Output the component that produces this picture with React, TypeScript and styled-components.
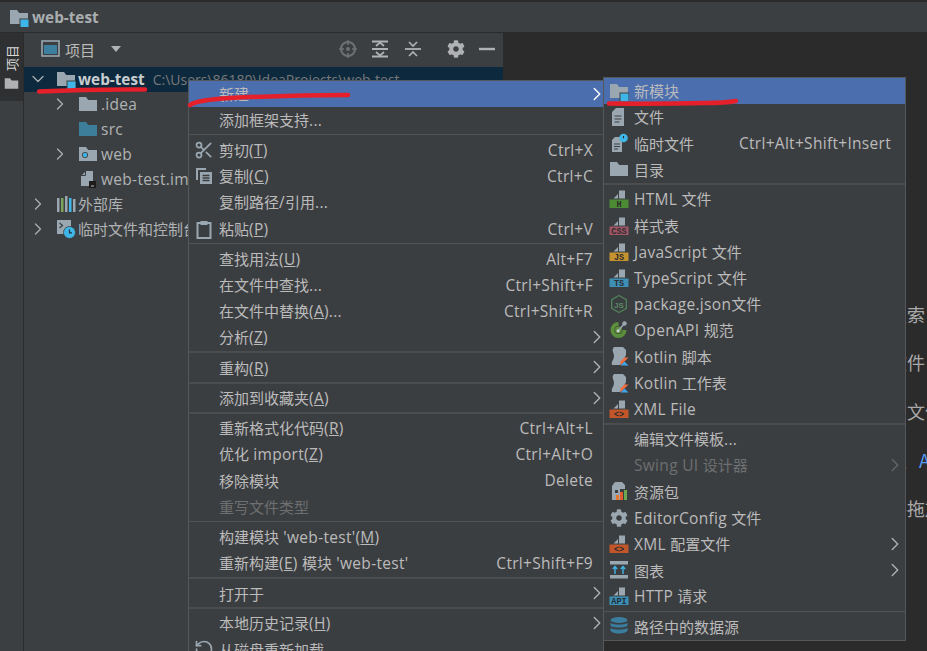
import React from 'react';
import styled, { createGlobalStyle } from 'styled-components';
import { Scissors, ChevronRight, ChevronDown, RotateCcw } from 'lucide-react';
import { FaCog } from 'react-icons/fa';

const Global = createGlobalStyle`
  html, body { margin: 0; padding: 0; background: #2b2b2b; }
  body { font-family: "Open Sans", "Noto Sans CJK SC", sans-serif; }
`;

const FONT = `"Open Sans", "Noto Sans CJK SC", sans-serif`;

const Page = styled.div`
  position: relative; width: 927px; height: 651px; overflow: hidden;
  display: flex; flex-direction: column; background: #2b2b2b; color: #bbbbbb; font-family: ${FONT};
`;
const TitleBar = styled.div`
  height: 30px; flex: none; margin-top: 2px; background: #3c3f41; border-bottom: 1px solid #2b2b2b;
  display: flex; align-items: center; gap: 3px; padding-left: 9px; box-sizing: content-box;
`;
const TitleText = styled.span`
  font-size: 15.3px; font-weight: 700; color: #a9adb0; line-height: 1; padding-top: 2px;
`;
const Body = styled.div`
  flex: 1; display: flex; min-height: 0;
`;
const SideBar = styled.div`
  width: 23px; flex: none; background: #3c3f41; border-right: 1px solid #2b2b2b;
`;
const SideTab = styled.div`
  height: 68px; background: #2e3031; display: flex; flex-direction: column; align-items: center; padding-top: 12px; box-sizing: border-box; gap: 5px;
`;
const SideLabel = styled.span`
  writing-mode: vertical-rl; text-orientation: sideways; transform: rotate(180deg); font-size: 13px; line-height: 14px; color: #d8d8d8;
`;
const ProjectPanel = styled.div`
  width: 479px; flex: none; background: #3c3f41; display: flex; flex-direction: column;
`;
const PanelHeader = styled.div`
  height: 34px; flex: none; display: flex; align-items: center; padding: 0 6px 2px 17px; box-sizing: border-box;
`;
const PanelTitle = styled.span`
  font-size: 15px; margin-left: 4px; color: #bbbbbb;
`;
const Caret = styled.span`
  width: 0; height: 0; margin-left: 16px; border-left: 5px solid transparent; border-right: 5px solid transparent; border-top: 6px solid #afb1b3;
`;
const HeaderTools = styled.div`
  margin-left: auto; display: flex; align-items: center; gap: 12.5px;
`;
const ToolGap = styled.span`
  width: 0; margin-left: -1px;
`;
const Tree = styled.div`
  display: flex; flex-direction: column;
`;
const TreeRow = styled.div<{ $depth: number; $selected?: boolean }>`
  height: 25px; display: flex; align-items: center; padding: 0 0 1px ${p => 4 + p.$depth * 22}px; gap: 2px; box-sizing: border-box;
  background: ${p => (p.$selected ? '#0d293e' : 'transparent')}; white-space: nowrap; font-size: 15px;
`;
const TreeArrow = styled.span`
  width: 20px; flex: none; display: flex; align-items: center; justify-content: center; color: #a9adb0; margin-right: 6px;
`;
const TreeName = styled.span<{ $bold?: boolean; $cjk?: boolean }>`
  font-weight: ${p => (p.$bold ? 700 : 400)}; font-size: ${p => (p.$bold ? 15.3 : 15)}px; color: ${p => (p.$bold ? '#c8ccce' : '#b0b3b5')};
  margin: ${p => (p.$cjk ? '-2px 0 0 0' : p.$bold ? '0' : '0 0 0 1px')};
`;
const TreePath = styled.span`
  color: #787878; margin-left: 6px; font-size: 14px;
`;
const Editor = styled.div`
  flex: 1; background: #2b2b2b; overflow: hidden; padding: 266.5px 0 0 350px; min-width: 0;
`;
const Hint = styled.div`
  height: 48.7px; font-size: 18px; line-height: 28px; color: #a9a9a9; white-space: nowrap; font-family: "Noto Sans CJK SC", sans-serif;
`;
const HintKey = styled.span`
  color: #589df6; margin-left: 12px;
`;
const Menu = styled.div<{ $left: number; $top: number; $width: number }>`
  position: absolute; left: ${p => p.$left}px; top: ${p => p.$top}px; width: ${p => p.$width}px;
  box-sizing: border-box; background: #3b3e41; border: 1px solid #55585a; display: flex; flex-direction: column;
`;
const Row = styled.div<{ $active?: boolean; $pad: number; $end: number }>`
  position: relative; flex: none; height: 26.2px; display: flex; align-items: center; padding: 0 ${p => p.$end}px 0 ${p => p.$pad}px;
  font-size: 15px; white-space: nowrap; background: ${p => (p.$active ? '#4b6eaf' : 'transparent')};
`;
const RowIcon = styled.span<{ $left: number }>`
  position: absolute; left: ${p => p.$left}px; top: 3px; width: 20px; height: 20px; color: #afb1b3; display: flex;
`;
const RowLabel = styled.span<{ $off?: boolean }>`
  color: ${p => (p.$off ? '#6d6f70' : '#bbbbbb')};
`;
const Shortcut = styled.span`
  margin-left: auto; color: #bbbbbb;
`;
const Latin = styled.span`
  font-size: 15.5px; letter-spacing: 0.3px;
`;
const RowArrow = styled.span<{ $off?: boolean; $active?: boolean; $right: number }>`
  position: absolute; right: ${p => p.$right}px; top: 2px; display: flex; color: ${p => (p.$active ? '#ffffff' : p.$off ? '#666' : '#afb1b3')};
`;
const Sep = styled.div<{ $thick?: boolean }>`
  flex: none; height: 4px; display: flex; align-items: center;
  &::after { content: ''; flex: 1; height: ${p => (p.$thick ? 2 : 1)}px; background: ${p => (p.$thick ? '#4c4d4e' : '#515355')}; }
`;
const Ink = styled.svg`
  position: absolute; left: 0; top: 0; pointer-events: none;
`;
const Icon = styled.svg`
  display: block; flex: none;
`;

/* Splits a label into CJK and Latin runs; "_X" inside a Latin run is an underlined mnemonic. */
const Mixed = ({ text }: { text: string }) => (
  <>
    {text.split(/([\x00-\x7f]+)/).map((run, n) =>
      n % 2 === 0 ? (
        run
      ) : (
        <Latin key={n}>
          {run.split(/_(.)/).map((part, m) => (m % 2 === 1 ? <u key={m}>{part}</u> : part))}
        </Latin>
      )
    )}
  </>
);

const G = '#9aa7b0';
const S = ({ children, size = 20 }: { children: React.ReactNode; size?: number }) => (
  <Icon width={size} height={size} viewBox="0 0 20 20">{children}</Icon>
);
const FolderPath = 'M1 3h7l2.2 3H19v11H1z';
const Folder = ({ c = G }: { c?: string }) => <S><path d={FolderPath} fill={c} /></S>;
const ModuleFolder = () => (
  <S><path d={FolderPath} fill={G} /><rect x="10.5" y="11.5" width="9.5" height="8.5" fill="#3c3f41" /><rect x="11.5" y="12.5" width="8" height="7.5" fill="#3fb6e8" /></S>
);
const WebFolder = () => (
  <S><path d={FolderPath} fill={G} /><circle cx="7" cy="11" r="3" fill="#3c3f41" /><circle cx="7" cy="11" r="2.2" fill="#3fb6e8" /></S>
);
const Doc = () => (
  <S>
    <path d="M7 1h8v18H3V5z" fill={G} />
    <path d="M5.5 9h7M5.5 12h7M5.5 15h5" stroke="#3c3f41" strokeWidth="1.2" />
  </S>
);
const Scratch = () => (
  <S>
    <path d="M6 4h7v15H3V7z" fill={G} />
    <path d="M5 11h6M5 13.5h6M5 16h4" stroke="#3c3f41" strokeWidth="1.2" />
    <circle cx="14.5" cy="5" r="4.3" fill="#3fb6e8" />
    <path d="M14.5 3v2.4" stroke="#2b2b2b" strokeWidth="1.1" />
  </S>
);
const Banner = ({ c, t, tc = '#2b2b2b', fs = 8.5 }: { c: string; t: string; tc?: string; fs?: number }) => (
  <S>
    <path d="M4.5 9.5l4.5-4.5v4.5z M10 1.5h6v8h-6z" fill={G} />
    <rect x="0.5" y="10.5" width="19" height="8.5" fill={c} />
    <text x="10" y="17.6" fontSize={fs} fontWeight="700" textAnchor="middle" fill={tc} fontFamily="Liberation Mono, monospace">{t}</text>
  </S>
);
const NodeIcon = () => (
  <S>
    <path d="M10 1.5l7.3 4.2v8.6L10 18.5l-7.3-4.2V5.7z" fill="none" stroke="#4f7f58" strokeWidth="1.4" />
    <text x="10" y="13.6" fontSize="8" fontWeight="700" textAnchor="middle" fill="#5c8a63" fontFamily="Liberation Sans, sans-serif">JS</text>
  </S>
);
const OpenApiIcon = () => (
  <S>
    <path d="M9.5 2a8 8 0 1 0 8 8h-4a4 4 0 1 1-4-4z" fill="#5b8f3c" />
    <circle cx="9.5" cy="10" r="3.4" fill="#5b8f3c" />
    <path d="M9 11l6-7" stroke={G} strokeWidth="1.5" />
    <circle cx="15.5" cy="3.5" r="2.2" fill={G} />
    <circle cx="9" cy="11" r="1.4" fill="#d5d5d5" />
  </S>
);
const KotlinIcon = () => (
  <S>
    <path d="M5 1h9l3 3v5l-5 10H3c-1-4 2-5 2-9S2 5 5 1z" fill={G} />
    <path d="M10 20l9-10h2v10z" fill="#3c3f41" />
    <path d="M11.5 19.5l8-8h-4l-4 4z" fill="#f26d3d" />
    <path d="M15.5 15.5l4 4h-8z" fill="#3fa5e8" />
  </S>
);
const BundleIcon = () => (
  <S>
    <path d="M6 1h7l3 3v4h-5v11H3V5z" fill={G} />
    <rect x="6" y="9" width="3" height="3" fill="#3c3f41" />
    <rect x="7" y="14" width="3" height="5" fill="#e8772e" />
    <rect x="11" y="11" width="3" height="8" fill="#e05c30" />
    <rect x="15" y="9" width="3" height="10" fill="#6aa84f" />
  </S>
);
const DiagramIcon = () => (
  <S>
    <rect x="1" y="1" width="18" height="3.5" fill={G} />
    <rect x="1" y="15" width="18" height="3.5" fill={G} />
    <path d="M6 14V7M3.8 9L6 6.5 8.2 9M14 14V7M11.8 9L14 6.5 16.2 9" fill="none" stroke="#3fb6e8" strokeWidth="1.4" />
  </S>
);
const DbIcon = () => (
  <S>
    <ellipse cx="10" cy="4" rx="8.5" ry="3" fill="#3b7d9e" />
    <path d="M1.5 6.5c1 2.8 16 2.8 17 0v3c-1 2.8-16 2.8-17 0zM1.5 11.5c1 2.8 16 2.8 17 0v3c-1 4-16 4-17 0z" fill="#3b7d9e" />
  </S>
);
const CopyIcon = () => (
  <S>
    <path d="M2 3h2v11H2zM2 2h10v2H2z" fill={G} />
    <path d="M6 6h12v12H6z" fill={G} />
    <path d="M8.5 9.5h7M8.5 12h7M8.5 14.5h7" stroke="#3c3f41" strokeWidth="1.3" />
  </S>
);
const PasteIcon = () => (
  <S>
    <path d="M3.5 4h13v15h-13z" fill="none" stroke={G} strokeWidth="2" />
    <rect x="6.5" y="2" width="7" height="4" fill={G} />
  </S>
);
const Libs = () => (
  <S>
    <rect x="1" y="4" width="2.5" height="14" fill={G} />
    <rect x="5" y="4" width="2.5" height="14" fill="#7ca45a" />
    <rect x="9" y="2" width="2.5" height="16" fill={G} />
    <rect x="13" y="4" width="2.5" height="14" fill="#3fb6e8" />
    <rect x="17" y="5" width="2.5" height="13" fill={G} />
  </S>
);
const ScratchFolder = () => (
  <S>
    <rect x="1" y="1" width="14" height="14" fill={G} />
    <path d="M3.5 4l3 2.5-3 2.5" fill="none" stroke="#3c3f41" strokeWidth="1.3" />
    <circle cx="13.5" cy="13.5" r="6" fill="#3fb6e8" stroke="#3c3f41" strokeWidth="0.8" />
    <path d="M13.5 10.5v3.3h2.5" fill="none" stroke="#22303a" strokeWidth="1.2" />
  </S>
);
const ImlIcon = () => (
  <S>
    <path d="M8 2h7v15H3V7z" fill={G} />
    <path d="M2.5 6.5h5V2" fill="none" stroke="#3c3f41" strokeWidth="1" />
    <rect x="11" y="12" width="7" height="7" fill="#1c1c1c" />
    <rect x="13" y="16.5" width="3" height="1" fill="#bbb" />
  </S>
);
const ViewIcon = () => (
  <S>
    <rect x="1" y="2" width="17" height="15" fill="none" stroke={G} strokeWidth="1.6" />
    <rect x="3" y="6" width="13" height="9" fill="#3c7f9e" />
  </S>
);
const Target = () => (
  <S>
    <circle cx="10" cy="10" r="7" fill="none" stroke="#6e7173" strokeWidth="2" />
    <circle cx="10" cy="10" r="2" fill="#6e7173" />
    <path d="M10 1v5M10 14v5M1 10h5M14 10h5" stroke="#6e7173" strokeWidth="1.6" />
  </S>
);
const ExpandAll = () => (
  <S>
    <path d="M2 2.5h16M2 17.5h16M2 10h16" stroke="#afb1b3" strokeWidth="1.8" />
    <path d="M6 7l4-3.5L14 7M6 13l4 3.5 4-3.5" fill="none" stroke="#afb1b3" strokeWidth="1.7" />
  </S>
);
const CollapseAll = () => (
  <S>
    <path d="M2 10h16" stroke="#afb1b3" strokeWidth="1.8" />
    <path d="M6 3l4 4 4-4M6 17l4-4 4 4" fill="none" stroke="#afb1b3" strokeWidth="1.7" />
  </S>
);
const Minus = () => <S><path d="M2 10h16" stroke="#afb1b3" strokeWidth="2.4" /></S>;

type Item = { l?: string; k?: string; i?: React.ReactNode; arrow?: boolean; off?: boolean; active?: boolean; sep?: boolean; thick?: boolean };

const mainItems: Item[] = [
  { l: '新建', arrow: true, active: true },
  { l: '添加框架支持...' },
  { sep: true },
  { l: '剪切(_T)', k: 'Ctrl+X', i: <Scissors size={20} strokeWidth={2.1} color={G} /> },
  { l: '复制(_C)', k: 'Ctrl+C', i: <CopyIcon /> },
  { l: '复制路径/引用...' },
  { l: '粘贴(_P)', k: 'Ctrl+V', i: <PasteIcon /> },
  { sep: true },
  { l: '查找用法(_U)', k: 'Alt+F7' },
  { l: '在文件中查找...', k: 'Ctrl+Shift+F' },
  { l: '在文件中替换(_A)...', k: 'Ctrl+Shift+R' },
  { l: '分析(_Z)', arrow: true },
  { sep: true, thick: true },
  { l: '重构(_R)', arrow: true },
  { sep: true, thick: true },
  { l: '添加到收藏夹(_A)', arrow: true },
  { sep: true, thick: true },
  { l: '重新格式化代码(_R)', k: 'Ctrl+Alt+L' },
  { l: '优化 import(_Z)', k: 'Ctrl+Alt+O' },
  { l: '移除模块', k: 'Delete' },
  { l: '重写文件类型', off: true },
  { sep: true },
  { l: "构建模块 'web-test'(_M)" },
  { l: "重新构建(_E) 模块 'web-test'", k: 'Ctrl+Shift+F9' },
  { sep: true, thick: true },
  { l: '打开于', arrow: true },
  { sep: true, thick: true },
  { l: '本地历史记录(_H)', arrow: true },
  { l: '从磁盘重新加载', i: <RotateCcw size={20} strokeWidth={2} color={G} /> },
];

const subItems: Item[] = [
  { l: '新模块', active: true, i: <ModuleFolder /> },
  { l: '文件', i: <Doc /> },
  { l: '临时文件', k: 'Ctrl+Alt+Shift+Insert', i: <Scratch /> },
  { l: '目录', i: <Folder /> },
  { sep: true, thick: true },
  { l: 'HTML 文件', i: <Banner c="#4d8a34" t="H" /> },
  { l: '样式表', i: <Banner c="#a15668" t="CSS" /> },
  { l: 'JavaScript 文件', i: <Banner c="#c4922f" t="JS" /> },
  { l: 'TypeScript 文件', i: <Banner c="#3d8fb5" t="TS" /> },
  { l: 'package.json文件', i: <NodeIcon /> },
  { l: 'OpenAPI 规范', i: <OpenApiIcon /> },
  { l: 'Kotlin 脚本', i: <KotlinIcon /> },
  { l: 'Kotlin 工作表', i: <KotlinIcon /> },
  { l: 'XML File', i: <Banner c="#c0562a" t="<>" /> },
  { sep: true, thick: true },
  { l: '编辑文件模板...' },
  { l: 'Swing UI 设计器', off: true, arrow: true },
  { l: '资源包', i: <BundleIcon /> },
  { l: 'EditorConfig 文件', i: <FaCog size={18} color={G} style={{ margin: 1 }} /> },
  { l: 'XML 配置文件', arrow: true, i: <Banner c="#c0562a" t="<>" /> },
  { l: '图表', arrow: true, i: <DiagramIcon /> },
  { l: 'HTTP 请求', i: <Banner c="#3d8fb5" t="API" tc="#1d2c36" /> },
  { sep: true },
  { l: '路径中的数据源', i: <DbIcon /> },
];

const PopupMenu = ({ items, left, top, width, end, arrowRight }: { items: Item[]; left: number; top: number; width: number; end: number; arrowRight: number }) => (
  <Menu $left={left} $top={top} $width={width}>
    {items.map((it, n) =>
      it.sep ? (
        <Sep key={n} $thick={it.thick} />
      ) : (
        <Row key={n} $active={it.active} $pad={30} $end={end}>
          {it.i && <RowIcon $left={5}>{it.i}</RowIcon>}
          <RowLabel $off={it.off}><Mixed text={it.l ?? ''} /></RowLabel>
          {it.k && <Shortcut><Latin>{it.k}</Latin></Shortcut>}
          {it.arrow && (
            <RowArrow $off={it.off} $active={it.active} $right={arrowRight}>
              <ChevronRight size={22} strokeWidth={1.5} />
            </RowArrow>
          )}
        </Row>
      )
    )}
  </Menu>
);

const Open = () => <TreeArrow><ChevronDown size={20} strokeWidth={1.6} /></TreeArrow>;
const Closed = () => <TreeArrow><ChevronRight size={20} strokeWidth={1.6} /></TreeArrow>;
const NoArrow = () => <TreeArrow />;

export default function App() {
  return (
    <Page>
      <Global />
      <TitleBar>
        <ModuleFolder />
        <TitleText>web-test</TitleText>
      </TitleBar>
      <Body>
        <SideBar>
          <SideTab>
            <SideLabel>项目</SideLabel>
            <S size={15}><path d={FolderPath} fill="#afb1b3" /></S>
          </SideTab>
        </SideBar>
        <ProjectPanel>
          <PanelHeader>
            <ViewIcon />
            <PanelTitle>项目</PanelTitle>
            <Caret />
            <HeaderTools>
              <Target />
              <ExpandAll />
              <CollapseAll />
              <ToolGap />
              <FaCog size={18} color="#afb1b3" />
              <Minus />
            </HeaderTools>
          </PanelHeader>
          <Tree>
            <TreeRow $depth={0} $selected><Open /><ModuleFolder /><TreeName $bold>web-test</TreeName><TreePath>C:\Users\86180\IdeaProjects\web-test</TreePath></TreeRow>
            <TreeRow $depth={1}><Closed /><Folder /><TreeName><Mixed text=".idea" /></TreeName></TreeRow>
            <TreeRow $depth={1}><NoArrow /><Folder c="#3d7e9a" /><TreeName><Mixed text="src" /></TreeName></TreeRow>
            <TreeRow $depth={1}><Closed /><WebFolder /><TreeName><Mixed text="web" /></TreeName></TreeRow>
            <TreeRow $depth={1}><NoArrow /><ImlIcon /><TreeName><Mixed text="web-test.iml" /></TreeName></TreeRow>
            <TreeRow $depth={0}><Closed /><Libs /><TreeName $cjk>外部库</TreeName></TreeRow>
            <TreeRow $depth={0}><Closed /><ScratchFolder /><TreeName $cjk>临时文件和控制台</TreeName></TreeRow>
          </Tree>
        </ProjectPanel>
        <Editor>
          <Hint>随处搜索</Hint>
          <Hint>转到文件</Hint>
          <Hint>最近的文件</Hint>
          <Hint>导航栏<HintKey>Alt+Home</HintKey></Hint>
          <Hint>将文件拖放到此处</Hint>
        </Editor>
      </Body>
      <PopupMenu items={mainItems} left={188} top={79.6} width={416} end={10} arrowRight={-5} />
      <PopupMenu items={subItems} left={603} top={76.6} width={303} end={14} arrowRight={-1} />
      <Ink width="927" height="651" viewBox="0 0 927 651">
        <g fill="none" stroke="#e6202a" strokeWidth="4.5" strokeLinecap="round">
          <path d="M39 91.5Q90 89 145 89.5" />
          <path d="M190 105Q197 100 230 98Q290 95 348 95" />
          <path d="M609 103.5Q660 104 705 103Q725 103 736 101" />
        </g>
      </Ink>
    </Page>
  );
}
